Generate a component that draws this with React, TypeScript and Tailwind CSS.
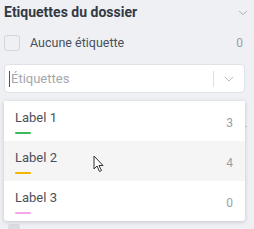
import { ChevronDown } from 'lucide-react'

const LABELS = [
  { name: 'Label 1', count: 3, color: 'bg-[#3dbb5c]' },
  { name: 'Label 2', count: 4, color: 'bg-[#f6b300]' },
  { name: 'Label 3', count: 0, color: 'bg-[#f7a6ea]' },
]

export default function App() {
  return (
    <div className="w-[254px] h-[229px] overflow-hidden bg-[#eef0f4] font-['Roboto',sans-serif] relative">
      <div className="flex items-center justify-between pl-[4px] pr-[4px] pt-[3px] h-[22px]">
        <h2 className="text-[14px] font-bold text-[#333a44]">Etiquettes du dossier</h2>
        <ChevronDown size={14} strokeWidth={1.5} className="text-[#9aa0a8]" />
      </div>

      <div className="flex items-center pl-[4px] pr-[11px] mt-[13px] h-[16px]">
        <span className="w-[16px] h-[16px] rounded-[3px] border border-[#d3d6db] bg-[#eef0f4]" />
        <span className="ml-[10px] text-[12.5px] text-[#4a505a] flex-1">Aucune étiquette</span>
        <span className="text-[12px] text-[#9a9ea5]">0</span>
      </div>

      <div className="mx-[4px] w-[241px] mt-[13px] h-[29px] bg-white border border-[#dfe2e6] rounded-[4px] flex items-center">
        <span className="ml-[4px] w-px h-[16px] bg-[#555]" />
        <span className="ml-[1px] flex-1 text-[13px] text-[#a4a8ae]">Étiquettes</span>
        <span className="w-px h-[16px] bg-[#dcdfe3]" />
        <ChevronDown size={16} strokeWidth={1.5} className="mx-[7px] text-[#b9bdc3]" />
      </div>

      <div className="absolute left-[244px] top-[126px] w-[3px] h-px bg-[#c9ccd1]" />
      <div className="absolute left-[8px] top-[224px] w-[12px] h-[8px] rounded-[2px] bg-[#dadde2]" />

      <div className="absolute left-[4px] top-[101px] w-[241px] bg-white shadow-[0_1px_4px_rgba(0,0,0,0.18)] rounded-b-[3px]">
        {LABELS.map((l, i) => (
          <div
            key={l.name}
            className={`h-[40px] flex items-start justify-between pl-[11px] pr-[12px] ${i === 1 ? 'bg-[#f5f5f5]' : ''}`}
          >
            <div className="flex flex-col pt-[9px]">
              <span className="text-[13px] leading-[15px] text-[#4a505a]">{l.name}</span>
              <span className={`mt-[7px] w-[16px] h-[2px] rounded-full ${l.color}`} />
            </div>
            <span className="pt-[13px] text-[12px] text-[#9a9ea5]">{l.count}</span>
          </div>
        ))}
      </div>

      <svg className="absolute left-[93px] top-[155px]" width="12" height="18" viewBox="0 0 12 18">
        <path d="M1 1 L1 14 L4 11 L6.5 16.5 L8.5 15.5 L6 10.5 L10 10.5 Z" fill="white" stroke="#333" strokeWidth="1" strokeLinejoin="round" />
      </svg>
    </div>
  )
}
